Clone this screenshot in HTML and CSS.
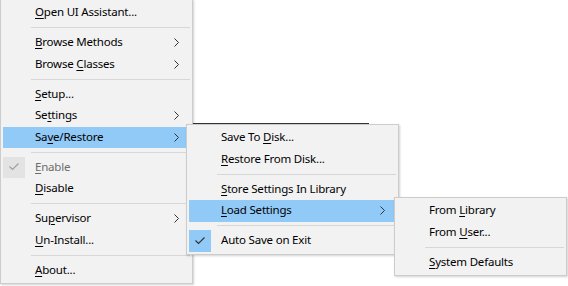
FILE: index.html
```html
<!DOCTYPE html>
<html>
<head>
<meta charset="utf-8">
<link rel="stylesheet" href="styles.css">
</head>
<body>
<div class="desk">
  <div class="backwin"></div>

  <div class="menu menu-main">
    <div class="item"><span class="label"><u>O</u>pen UI Assistant...</span></div>
    <div class="sep"></div>
    <div class="item"><span class="label"><u>B</u>rowse Methods</span><svg class="arrow" width="5" height="9" viewBox="0 0 5 9"><polyline points="0.5,0.5 4.5,4.5 0.5,8.5"/></svg></div>
    <div class="item"><span class="label">Browse <u>C</u>lasses</span><svg class="arrow" width="5" height="9" viewBox="0 0 5 9"><polyline points="0.5,0.5 4.5,4.5 0.5,8.5"/></svg></div>
    <div class="sep"></div>
    <div class="item"><span class="label"><u>S</u>etup...</span></div>
    <div class="item"><span class="label">Se<u>t</u>tings</span><svg class="arrow" width="5" height="9" viewBox="0 0 5 9"><polyline points="0.5,0.5 4.5,4.5 0.5,8.5"/></svg></div>
    <div class="item active"><span class="label">Sa<u>v</u>e/Restore</span><svg class="arrow" width="5" height="9" viewBox="0 0 5 9"><polyline points="0.5,0.5 4.5,4.5 0.5,8.5"/></svg></div>
    <div class="sep"></div>
    <div class="item disabled"><span class="check check-off"><svg width="10" height="8" viewBox="0 0 10 8"><polyline points="0.5,3.5 3.5,6.5 9.5,0.5"/></svg></span><span class="label"><u>E</u>nable</span></div>
    <div class="item"><span class="label"><u>D</u>isable</span></div>
    <div class="sep"></div>
    <div class="item"><span class="label">Su<u>p</u>ervisor</span><svg class="arrow" width="5" height="9" viewBox="0 0 5 9"><polyline points="0.5,0.5 4.5,4.5 0.5,8.5"/></svg></div>
    <div class="item"><span class="label"><u>U</u>n-Install...</span></div>
    <div class="sep"></div>
    <div class="item"><span class="label"><u>A</u>bout...</span></div>
  </div>

  <div class="menu menu-save">
    <div class="item"><span class="label">Save To <u>D</u>isk...</span></div>
    <div class="item"><span class="label"><u>R</u>estore From Disk...</span></div>
    <div class="sep"></div>
    <div class="item"><span class="label"><u>S</u>tore Settings In Library</span></div>
    <div class="item active"><span class="label"><u>L</u>oad Settings</span><svg class="arrow" width="5" height="9" viewBox="0 0 5 9"><polyline points="0.5,0.5 4.5,4.5 0.5,8.5"/></svg></div>
    <div class="sep"></div>
    <div class="item"><span class="check check-on"><svg width="10" height="8" viewBox="0 0 10 8"><polyline points="0.5,3.5 3.5,6.5 9.5,0.5"/></svg></span><span class="label">Auto Save on Exit</span></div>
  </div>

  <div class="menu menu-load">
    <div class="item"><span class="label">From <u>L</u>ibrary</span></div>
    <div class="item"><span class="label">From <u>U</u>ser...</span></div>
    <div class="sep"></div>
    <div class="item"><span class="label"><u>S</u>ystem Defaults</span></div>
  </div>
</div>
</body>
</html>
```

FILE: styles.css
```css
html, body {
  margin: 0;
  padding: 0;
  background: #ffffff;
}

.desk {
  position: relative;
  width: 568px;
  height: 286px;
  overflow: hidden;
  font-family: "Noto Sans", "Open Sans", sans-serif;
  font-size: 11.5px;
  letter-spacing: -0.2px;
  color: #000000;
}

.backwin {
  position: absolute;
  left: 192px;
  top: -10px;
  width: 176px;
  height: 133px;
  border-left: 1px solid #3a3232;
  border-bottom: 1px solid #3a3232;
  background: #ffffff;
}

.menu {
  position: absolute;
  display: flex;
  flex-direction: column;
  background: #f2f2f2;
  border: 1px solid #cccccc;
  padding: 2px;
  box-shadow: 1px 1px 2px rgba(0, 0, 0, 0.18);
}

.menu-main {
  left: 0;
  top: -1px;
  width: 187px;
}

.menu-save {
  left: 186px;
  top: 124px;
  width: 207px;
}

.menu-load {
  left: 394px;
  top: 197px;
  width: 167px;
}

.item {
  position: relative;
  display: flex;
  align-items: center;
  height: 21.5px;
  padding-left: 32px;
  padding-right: 11px;
  white-space: nowrap;
}

.item .label {
  flex: 1;
  line-height: 1;
  margin-top: -2px;
}

.item u {
  text-decoration: underline;
  text-underline-offset: 2px;
}

.item.active {
  background: #91c9f7;
}

.item.disabled {
  color: #6d6d6d;
}

.arrow {
  display: block;
  fill: none;
  stroke: #333333;
  stroke-width: 1;
}

.check {
  position: absolute;
  left: 0;
  top: 0;
  width: 22px;
  height: 100%;
  display: flex;
  align-items: center;
  justify-content: center;
}

.check svg {
  fill: none;
  stroke-width: 1.2;
}

.check-off {
  background: #e3e3e3;
}

.check-off svg {
  stroke: #a0a0a0;
}

.check-on {
  background: #91c9f7;
}

.check-on svg {
  stroke: #333333;
}

.sep {
  height: 8.5px;
  display: flex;
  align-items: center;
  padding-left: 28px;
}

.sep::after {
  content: "";
  display: block;
  flex: 1;
  height: 1px;
  background: #d7d7d7;
}
```
